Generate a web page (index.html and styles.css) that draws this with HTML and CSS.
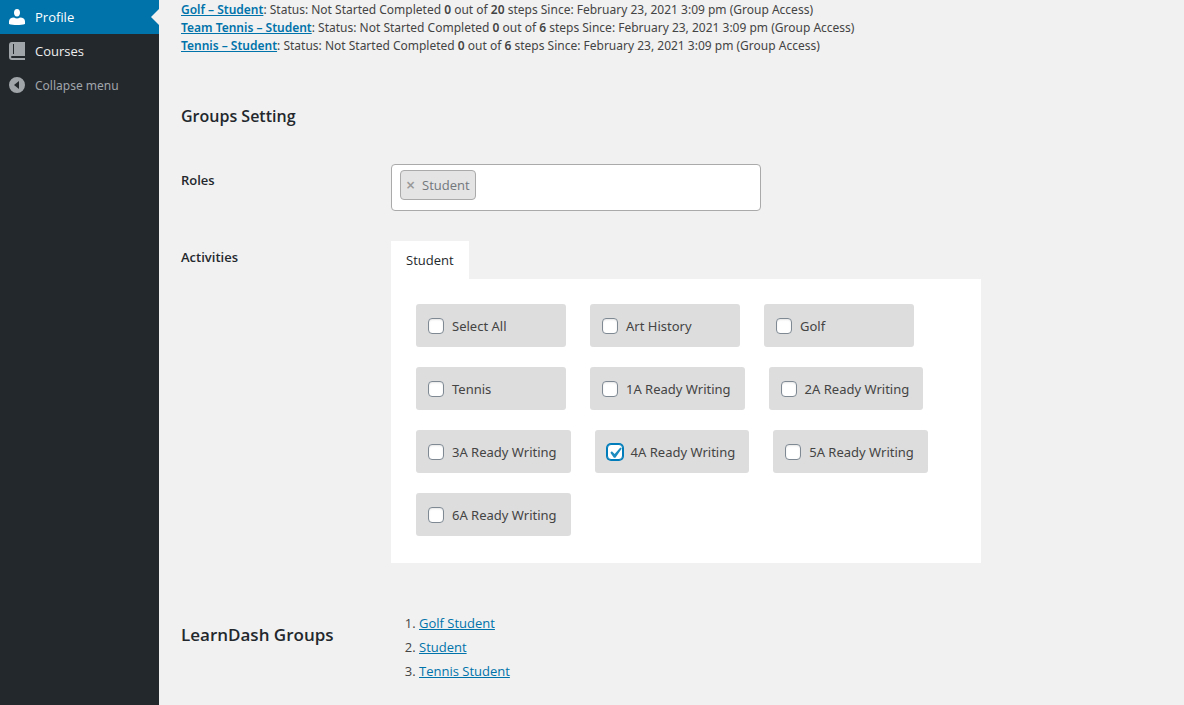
FILE: index.html
```
<!DOCTYPE html>
<html lang="en">
<head>
    <meta charset="UTF-8">
    <meta name="viewport" content="width=device-width, initial-scale=1.0">
    <title>Profile</title>
    <link rel="stylesheet" href="styles.css">
</head>
<body>
    <nav class="sidebar">
        <a href="#" class="menu-item current">
            <svg class="menu-icon" viewBox="0 0 20 20">
                <path fill="currentColor" d="M10 9.500c-2.300 0-3-2-3-3.800C7 3.500 8 2 10 2s3 1.500 3 3.700c0 1.800-.7 3.800-3 3.800zM7 10.500c1 .7 2 1 3 1s2-.3 3-1c3 0 5 1.500 5 4V17c-2 .7-5 1-8 1s-6-.3-8-1v-2.500c0-2.500 2-4 5-4z"/>
            </svg>
            Profile
        </a>
        <a href="#" class="menu-item">
            <svg class="menu-icon gray" viewBox="0 0 20 20">
                <path fill="currentColor" fill-rule="evenodd" d="M5 1h13v18H5c-2 0-3-1-3-3V4c0-2 1-3 3-3zM6 3h1v10H6zM5 15h13v2H5c-1.300 0-1.300-2 0-2z"/>
            </svg>
            Courses
        </a>
        <button type="button" class="menu-item collapse">
            <svg class="menu-icon gray" viewBox="0 0 20 20">
                <path fill="currentColor" fill-rule="evenodd" d="M10 2a8 8 0 1 0 0 16a8 8 0 1 0 0-16zM12 6v8l-5-4z"/>
            </svg>
            Collapse menu
        </button>
    </nav>

    <main class="content">
        <div class="course-list">
            <div><a href="#">Golf – Student</a>: Status: Not Started Completed <b>0</b> out of <b>20</b> steps Since: February 23, 2021 3:09 pm (Group Access)</div>
            <div><a href="#">Team Tennis – Student</a>: Status: Not Started Completed <b>0</b> out of <b>6</b> steps Since: February 23, 2021 3:09 pm (Group Access)</div>
            <div><a href="#">Tennis – Student</a>: Status: Not Started Completed <b>0</b> out of <b>6</b> steps Since: February 23, 2021 3:09 pm (Group Access)</div>
        </div>

        <h2>Groups Setting</h2>

        <div class="form-row">
            <div class="form-label">Roles</div>
            <div class="form-field">
                <div class="role-select">
                    <span class="tag"><button type="button" class="tag-remove" aria-label="Remove Student">×</button>Student</span>
                </div>
            </div>
        </div>

        <div class="form-row">
            <div class="form-label">Activities</div>
            <div class="form-field">
                <button type="button" class="tab">Student</button>
                <div class="panel">
                    <label class="activity"><input type="checkbox">Select All</label>
                    <label class="activity"><input type="checkbox">Art History</label>
                    <label class="activity"><input type="checkbox">Golf</label>
                    <label class="activity"><input type="checkbox">Tennis</label>
                    <label class="activity"><input type="checkbox">1A Ready Writing</label>
                    <label class="activity"><input type="checkbox">2A Ready Writing</label>
                    <label class="activity"><input type="checkbox">3A Ready Writing</label>
                    <label class="activity"><input type="checkbox" checked>4A Ready Writing</label>
                    <label class="activity"><input type="checkbox">5A Ready Writing</label>
                    <label class="activity"><input type="checkbox">6A Ready Writing</label>
                </div>
            </div>
        </div>

        <div class="groups-row">
            <h2>LearnDash Groups</h2>
            <ol>
                <li><a href="#">Golf Student</a></li>
                <li><a href="#">Student</a></li>
                <li><a href="#">Tennis Student</a></li>
            </ol>
        </div>
    </main>
</body>
</html>
```
FILE: styles.css
```
* {
    box-sizing: border-box;
}
body {
    display: flex;
    min-height: 100vh;
    margin: 0;
    background-color: #f1f1f1;
    color: #444;
    font-family: "Open Sans", "Noto Sans", sans-serif;
    font-size: 13px;
}
a {
    color: #0073aa;
}
button {
    border: none;
    background: none;
    font: inherit;
    cursor: pointer;
}

/* Sidebar */
.sidebar {
    flex: none;
    width: 159px;
    background-color: #23282d;
}
.menu-item {
    position: relative;
    display: flex;
    align-items: center;
    gap: 8px;
    width: 100%;
    height: 34px;
    padding: 0 7px;
    color: #eee;
    text-decoration: none;
}
.menu-item.current {
    background-color: #0073aa;
    color: #fff;
}
.menu-item.current::after {
    content: "";
    position: absolute;
    top: 9px;
    right: 0;
    border: 8px solid transparent;
    border-left: none;
    border-right-color: #f1f1f1;
}
.menu-item.collapse {
    color: #a0a5aa;
    font-family: "Noto Sans", sans-serif;
    font-size: 12px;
}
.menu-icon {
    width: 20px;
    height: 20px;
}
.menu-icon.gray {
    color: #a0a5aa;
}

/* Content */
.content {
    flex: 1;
    padding: 1px 22px 0;
}
.course-list {
    font-family: "Noto Sans", sans-serif;
    font-size: 12px;
    line-height: 18px;
}
.course-list a {
    font-weight: 600;
}
b {
    font-weight: 600;
}
h2 {
    margin: 0;
    color: #23282d;
    font-size: 16px;
    font-weight: 600;
    line-height: 24px;
}
.course-list + h2 {
    margin: 49px 0 36px;
}
.form-row {
    display: flex;
    margin-bottom: 30px;
}
.form-label {
    flex: none;
    width: 210px;
    padding-top: 7px;
    color: #23282d;
    font-weight: 600;
    line-height: 18px;
}
.form-field {
    flex: 1;
}
.role-select {
    max-width: 370px;
    padding: 5px 8px 10px;
    border: 1px solid #aaa;
    border-radius: 4px;
    background-color: #fff;
}
.tag {
    display: inline-flex;
    align-items: center;
    height: 30px;
    padding: 0 5px;
    border: 1px solid #aaa;
    border-radius: 4px;
    background-color: #e4e4e4;
    color: #72777c;
    vertical-align: top;
}
.tag-remove {
    padding: 0;
    width: 16px;
    color: #999;
    font-size: 16px;
    font-weight: 600;
    text-align: left;
}
.tab {
    display: block;
    height: 38px;
    padding: 0 15px;
    background-color: #fff;
    color: #23282d;
}
.panel {
    display: flex;
    flex-wrap: wrap;
    gap: 20px 24px;
    max-width: 590px;
    padding: 25px 25px 27px;
    background-color: #fff;
}
.activity {
    display: flex;
    align-items: center;
    gap: 8px;
    min-width: 150px;
    height: 43px;
    padding: 0 14px 0 12px;
    border-radius: 3px;
    background-color: #ddd;
    font-family: "Noto Sans", sans-serif;
}
.activity input {
    appearance: none;
    width: 16px;
    height: 16px;
    margin: 0;
    border: 1px solid #7e8993;
    border-radius: 4px;
    background-color: #fff;
    box-shadow: inset 0 1px 2px rgba(0, 0, 0, 0.1);
}
.activity input:checked {
    border-color: #007cba;
    background: #fff url("data:image/svg+xml,%3Csvg xmlns='http://www.w3.org/2000/svg' viewBox='0 0 20 20'%3E%3Cpath d='M14.830 4.890l1.340.940-5.810 8.380H9.020L5.780 9.670l1.340-1.250 2.570 2.400z' fill='%231e8cbe'/%3E%3C/svg%3E") -4px -3px / 22px no-repeat;
    box-shadow: 0 0 0 1px #007cba;
}

/* LearnDash groups */
.groups-row {
    display: flex;
    padding-top: 18px;
}
.groups-row h2 {
    width: 210px;
    padding-top: 12px;
    font-size: 17px;
}
.groups-row ol {
    margin: 0;
    padding-left: 28px;
    line-height: 24px;
}
```
